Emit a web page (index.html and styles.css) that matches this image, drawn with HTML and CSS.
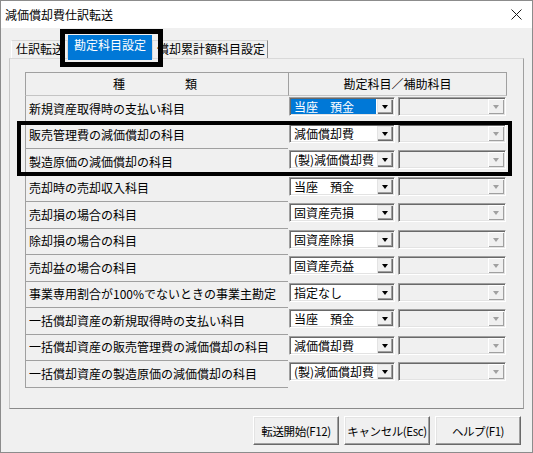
FILE: index.html
```html
<!DOCTYPE html>
<html lang="ja">
<head>
<meta charset="utf-8">
<title>減価償却費仕訳転送</title>
<link rel="stylesheet" href="styles.css">
</head>
<body>
<div class="window">
  <div class="titlebar">
    <span class="title">減価償却費仕訳転送</span>
    <svg class="close" width="11" height="11" viewBox="0 0 11 11" aria-label="閉じる">
      <path d="M0.5 0.5 L10.5 10.5 M10.5 0.5 L0.5 10.5" stroke="#1a1a1a" stroke-width="1" fill="none"/>
    </svg>
  </div>

  <div class="body">
    <div class="tabs">
      <div class="tab tab-first">仕訳転送</div>
      <div class="tab tab-active">勘定科目設定</div>
      <div class="tab tab-last">償却累計額科目設定</div>
    </div>

    <div class="panel">
      <div class="grid">
        <div class="hcell hcell-kind"><span>種</span><span>類</span></div>
        <div class="hcell hcell-acct">勘定科目／補助科目</div>

        <div class="label">新規資産取得時の支払い科目</div>
        <div class="pick">
          <div class="combo"><span class="combo-text combo-text-sel">当座　預金</span><span class="drop"><i class="tri"></i></span></div>
          <div class="combo combo-off"><span class="combo-text"></span><span class="drop"><i class="tri"></i></span></div>
        </div>

        <div class="label">販売管理費の減価償却の科目</div>
        <div class="pick">
          <div class="combo"><span class="combo-text">減価償却費</span><span class="drop"><i class="tri"></i></span></div>
          <div class="combo combo-off"><span class="combo-text"></span><span class="drop"><i class="tri"></i></span></div>
        </div>

        <div class="label">製造原価の減価償却の科目</div>
        <div class="pick">
          <div class="combo"><span class="combo-text">(製)減価償却費</span><span class="drop"><i class="tri"></i></span></div>
          <div class="combo combo-off"><span class="combo-text"></span><span class="drop"><i class="tri"></i></span></div>
        </div>

        <div class="label">売却時の売却収入科目</div>
        <div class="pick">
          <div class="combo"><span class="combo-text">当座　預金</span><span class="drop"><i class="tri"></i></span></div>
          <div class="combo combo-off"><span class="combo-text"></span><span class="drop"><i class="tri"></i></span></div>
        </div>

        <div class="label">売却損の場合の科目</div>
        <div class="pick">
          <div class="combo"><span class="combo-text">固資産売損</span><span class="drop"><i class="tri"></i></span></div>
          <div class="combo combo-off"><span class="combo-text"></span><span class="drop"><i class="tri"></i></span></div>
        </div>

        <div class="label">除却損の場合の科目</div>
        <div class="pick">
          <div class="combo"><span class="combo-text">固資産除損</span><span class="drop"><i class="tri"></i></span></div>
          <div class="combo combo-off"><span class="combo-text"></span><span class="drop"><i class="tri"></i></span></div>
        </div>

        <div class="label">売却益の場合の科目</div>
        <div class="pick">
          <div class="combo"><span class="combo-text">固資産売益</span><span class="drop"><i class="tri"></i></span></div>
          <div class="combo combo-off"><span class="combo-text"></span><span class="drop"><i class="tri"></i></span></div>
        </div>

        <div class="label">事業専用割合が100%でないときの事業主勘定</div>
        <div class="pick">
          <div class="combo"><span class="combo-text">指定なし</span><span class="drop"><i class="tri"></i></span></div>
          <div class="combo combo-off"><span class="combo-text"></span><span class="drop"><i class="tri"></i></span></div>
        </div>

        <div class="label">一括償却資産の新規取得時の支払い科目</div>
        <div class="pick">
          <div class="combo"><span class="combo-text">当座　預金</span><span class="drop"><i class="tri"></i></span></div>
          <div class="combo combo-off"><span class="combo-text"></span><span class="drop"><i class="tri"></i></span></div>
        </div>

        <div class="label">一括償却資産の販売管理費の減価償却の科目</div>
        <div class="pick">
          <div class="combo"><span class="combo-text">減価償却費</span><span class="drop"><i class="tri"></i></span></div>
          <div class="combo combo-off"><span class="combo-text"></span><span class="drop"><i class="tri"></i></span></div>
        </div>

        <div class="label">一括償却資産の製造原価の減価償却の科目</div>
        <div class="pick">
          <div class="combo"><span class="combo-text">(製)減価償却費</span><span class="drop"><i class="tri"></i></span></div>
          <div class="combo combo-off"><span class="combo-text"></span><span class="drop"><i class="tri"></i></span></div>
        </div>
      </div>
    </div>

    <div class="buttons">
      <button class="btn" type="button">転送開始(F12)</button>
      <button class="btn" type="button">キャンセル(Esc)</button>
      <button class="btn" type="button">ヘルプ(F1)</button>
    </div>
  </div>

  <!-- emphasis frames drawn over the dialog -->
  <div class="mark mark-tab"></div>
  <div class="mark mark-rows"></div>
</div>
</body>
</html>
```

FILE: styles.css
```css
* { box-sizing: border-box; }

html, body {
  margin: 0;
  padding: 0;
}

body {
  width: 533px;
  height: 453px;
  background: #fff;
  font-family: "Noto Sans CJK JP", "Noto Sans", sans-serif;
  font-size: 12px;
  color: #000;
}

.window {
  position: relative;
  width: 533px;
  height: 453px;
  border: 1px solid #8c8c8c;
  background: #f0f0f0;
  display: flex;
  flex-direction: column;
}

/* title bar */
.titlebar {
  height: 27px;
  flex: none;
  background: #fff;
  display: flex;
  align-items: center;
  justify-content: space-between;
  padding: 0 10px 0 4px;
}

.title {
  line-height: 14px;
}

.close {
  display: block;
}

.body {
  flex: 1;
  display: flex;
  flex-direction: column;
  padding: 7px 8px 6px;
}

/* tab strip */
.tabs {
  display: flex;
  align-items: flex-end;
  height: 23px;
  padding-left: 2px;
}

.tab {
  height: 18px;
  line-height: 16px;
  padding: 0 0 0 4px;
  background: #f0f0f0;
  border: 1px solid #d9d9d9;
  border-bottom: none;
  white-space: nowrap;
  overflow: hidden;
}

.tab-first {
  width: 57px;
  border-left-color: #fff;
}

.tab-active {
  position: relative;
  z-index: 1;
  width: 84px;
  height: 25px;
  margin-bottom: -2px;
  padding: 2px 0 0;
  background: #0078d7;
  color: #fff;
  border: none;
  text-align: center;
}

.tab-last {
  width: 116px;
  border-right: 1px solid #8a8a8a;
}

/* tab page */
.panel {
  height: 351px;
  flex: none;
  border: 1px solid;
  border-color: #d9d9d9 #a0a0a0 #8a8a8a #c8c8c8;
  padding: 13px 0 0 15px;
}

.grid {
  width: 482px;
  display: grid;
  grid-template-columns: 263px 219px;
  grid-template-rows: 24px repeat(11, 26.5px);
}

.hcell {
  border-top: 1px solid #a0a0a0;
  border-left: 1px solid #a0a0a0;
  border-bottom: 1px solid #c4c4c4;
  display: flex;
  align-items: center;
  justify-content: center;
  line-height: 14px;
}

.hcell-kind {
  gap: 60px;
  padding-right: 4px;
}

.hcell-acct {
  border-right: 1px solid #a0a0a0;
}

.label {
  border-left: 1px solid #a0a0a0;
  border-bottom: 1px solid #a0a0a0;
  padding-left: 3px;
  display: flex;
  align-items: center;
  white-space: nowrap;
  line-height: 14px;
}

.pick {
  display: flex;
  align-items: flex-start;
  gap: 3px;
  padding: 1px 0 0 1px;
}

/* drop-down boxes */
.combo {
  width: 106px;
  height: 19px;
  display: flex;
  background: #fff;
  border: 1px solid;
  border-color: #a0a0a0 #fff #fff #a0a0a0;
  box-shadow: inset 1px 1px 0 #696969, inset -1px -1px 0 #e3e3e3;
  padding: 1px;
}

.combo-text {
  flex: 1;
  padding-left: 3px;
  line-height: 15px;
  white-space: nowrap;
  overflow: hidden;
}

.combo-text-sel {
  background: #0078d7;
  color: #fff;
  margin-right: 1px;
}

.drop {
  width: 16px;
  flex: none;
  display: flex;
  align-items: center;
  justify-content: center;
  background: #f0f0f0;
  box-shadow: inset 1px 1px 0 #e3e3e3, inset -1px -1px 0 #696969, inset -2px -2px 0 #a0a0a0;
}

.tri {
  display: block;
  width: 0;
  height: 0;
  border-left: 3.5px solid transparent;
  border-right: 3.5px solid transparent;
  border-top: 4px solid #000;
  margin-top: 1px;
}

.combo-off {
  width: 108px;
  background: #f0f0f0;
}

.combo-off .drop {
  box-shadow: inset 1px 1px 0 #fff, inset -1px -1px 0 #a0a0a0;
}

.combo-off .tri {
  border-top-color: #a0a0a0;
}

/* command buttons */
.buttons {
  display: flex;
  justify-content: flex-end;
  gap: 5px;
  margin-top: 7px;
  padding-right: 3px;
}

.btn {
  width: 86px;
  height: 29px;
  padding: 0;
  font-family: inherit;
  font-size: 11.5px;
  letter-spacing: -0.4px;
  white-space: nowrap;
  color: #000;
  background: #f0f0f0;
  border: 1px solid;
  border-color: #fff #696969 #696969 #fff;
  box-shadow: inset -1px -1px 0 #a0a0a0, inset 1px 1px 0 #e3e3e3;
  border-radius: 0;
}

/* emphasis frames */
.mark {
  position: absolute;
  border: 4px solid #000;
  pointer-events: none;
}

.mark-tab {
  left: 59px;
  top: 28px;
  width: 103px;
  height: 38px;
  border-width: 5px;
}

.mark-rows {
  left: 16px;
  top: 120px;
  width: 495px;
  height: 55px;
}
```
